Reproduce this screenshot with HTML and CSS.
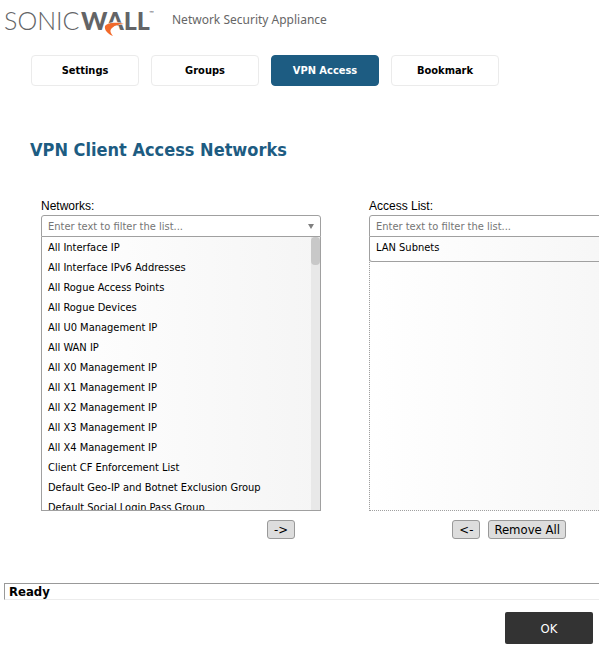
FILE: index.html
```html
<!DOCTYPE html>
<html lang="en">
<head>
  <meta charset="UTF-8" />
  <meta name="viewport" content="width=device-width, initial-scale=1.0"/>
  <title>VPN Client Access Networks</title>
  <link rel="stylesheet" href="styles.css">
</head>
<body>
  <header class="page-header">
    <svg class="logo" viewBox="0 0 154 30" width="154" height="30" role="img" aria-label="SonicWall">
      <text class="logo-light" x="0" y="22">SONIC</text>
      <text class="logo-bold" x="77" y="22">WALL</text>
      <text class="logo-tm" x="145" y="7">™</text>
      <path d="M120 16 C114 14 104 14 101 18 C100 22 104 26 109 28 C107 25 105 23 108 20 C111 17 116 16 120 16 Z" fill="#f26a2a" stroke="#fff" stroke-width="1" paint-order="stroke"/>
    </svg>
    <span class="product">Network Security Appliance</span>
  </header>

  <nav class="tabs">
    <button type="button" class="tab">Settings</button>
    <button type="button" class="tab">Groups</button>
    <button type="button" class="tab active">VPN Access</button>
    <button type="button" class="tab">Bookmark</button>
  </nav>

  <main>
    <h1>VPN Client Access Networks</h1>

    <div class="lists">
      <section class="list-column">
        <label for="networks">Networks:</label>
        <div class="filter">
          <input type="text" id="networks" placeholder="Enter text to filter the list..." />
          <svg class="arrow" viewBox="0 0 6 5" width="6" height="5"><path d="M0 0h6L3 5z" fill="#808080"/></svg>
        </div>
        <div class="list-box">
          <ul class="items">
            <li>All Interface IP</li>
            <li>All Interface IPv6 Addresses</li>
            <li>All Rogue Access Points</li>
            <li>All Rogue Devices</li>
            <li>All U0 Management IP</li>
            <li>All WAN IP</li>
            <li>All X0 Management IP</li>
            <li>All X1 Management IP</li>
            <li>All X2 Management IP</li>
            <li>All X3 Management IP</li>
            <li>All X4 Management IP</li>
            <li>Client CF Enforcement List</li>
            <li>Default Geo-IP and Botnet Exclusion Group</li>
            <li>Default Social Login Pass Group</li>
          </ul>
          <div class="scroll-track"><div class="scroll-thumb"></div></div>
        </div>
        <div class="list-actions">
          <button type="button" class="small-btn" aria-label="Add">-&gt;</button>
        </div>
      </section>

      <section class="list-column">
        <label for="access">Access List:</label>
        <div class="filter">
          <input type="text" id="access" placeholder="Enter text to filter the list..." />
        </div>
        <div class="drop-box">
          <ul class="items selected-items">
            <li>LAN Subnets</li>
          </ul>
        </div>
        <div class="list-actions access-actions">
          <button type="button" class="small-btn" aria-label="Remove">&lt;-</button>
          <button type="button" class="small-btn">Remove All</button>
        </div>
      </section>
    </div>
  </main>

  <footer>
    <div class="status">Ready</div>
    <div class="footer-actions">
      <button type="button" class="ok-btn">OK</button>
    </div>
  </footer>
</body>
</html>
```
FILE: styles.css
```css
:root {
  --blue: #1d5c82;
  --border: #a0a0a0;
  --fade: linear-gradient(to right, #ffffff, #f5f5f5);
  --font-family: Tahoma, "DejaVu Sans Condensed", "Noto Sans", sans-serif;
}

* {
  margin: 0;
  padding: 0;
  box-sizing: border-box;
}

body {
  font-family: var(--font-family);
  font-size: 11px;
  background: #fff;
  color: #000;
  overflow-x: hidden;
}

button,
input {
  font-family: inherit;
}

.page-header {
  display: flex;
  align-items: flex-start;
  gap: 14px;
  height: 55px;
  padding: 8px 4px;
}

.logo {
  flex-shrink: 0;
  overflow: visible;
}

.logo text {
  font-family: Lato, sans-serif;
  font-size: 25px;
  fill: #636466;
}

.logo .logo-light {
  font-weight: 300;
}

.logo .logo-bold {
  font-weight: 900;
}

.logo .logo-tm {
  font-size: 6px;
}

.product {
  font-family: "Noto Sans", sans-serif;
  font-size: 12px;
  line-height: 24px;
  color: #666;
}

.tabs {
  display: flex;
  gap: 12px;
  padding-left: 31px;
}

.tab {
  width: 108px;
  height: 31px;
  background: #fff;
  border: 1px solid #ebebeb;
  border-radius: 4px;
  font-size: 11px;
  font-weight: bold;
  cursor: pointer;
}

.tab.active {
  background: var(--blue);
  border-color: var(--blue);
  color: #fff;
}

h1 {
  margin: 52px 0 0 30px;
  font-size: 18px;
  line-height: 24px;
  color: var(--blue);
}

.lists {
  display: flex;
  gap: 48px;
  padding: 36px 0 0 41px;
}

.list-column {
  flex: 0 0 280px;
}

.list-column label {
  display: block;
  font-family: Arial, "Liberation Sans", sans-serif;
  font-size: 12px;
  line-height: 17px;
}

.filter {
  display: flex;
  align-items: center;
  height: 22px;
  padding: 1px 6px 0;
  border: 1px solid var(--border);
  border-radius: 3px 3px 0 0;
}

.filter input {
  flex: 1;
  min-width: 0;
  border: none;
  outline: none;
  background: transparent;
  font-size: 11px;
}

.filter input::placeholder {
  color: #757575;
}

.list-box {
  display: flex;
  height: 274px;
  border: 1px solid var(--border);
  border-top: none;
  background: var(--fade);
  overflow: hidden;
}

.items {
  flex: 1;
  padding-top: 1px;
  list-style: none;
}

.items li {
  padding-left: 6px;
  line-height: 20px;
  white-space: nowrap;
}

.scroll-track {
  width: 9px;
  background: #e8e8e8;
}

.scroll-thumb {
  height: 28px;
  border-radius: 4px;
  background: #c8c8c8;
}

.drop-box {
  height: 274px;
  border: 1px dotted var(--border);
  border-top: none;
  background: var(--fade);
}

.selected-items {
  margin: 0 -1px;
  padding-bottom: 3px;
  border: 1px solid var(--border);
  border-top: none;
  border-radius: 0 0 3px 3px;
}

.list-actions {
  display: flex;
  justify-content: flex-end;
  gap: 8px;
  padding: 9px 26px 0 0;
}

.access-actions {
  padding-right: 83px;
}

.small-btn {
  min-width: 28px;
  height: 19px;
  padding: 0 5px;
  background: #dddddd;
  border: 1px solid #999;
  border-radius: 3px;
  font-size: 13px;
  line-height: 17px;
  color: #000;
  cursor: pointer;
}

.status {
  margin: 44px 0 0 4px;
  padding-left: 4px;
  border: 1px solid #999;
  border-right: none;
  border-bottom-color: #ececec;
  font-size: 13px;
  font-weight: bold;
  line-height: 15px;
}

.footer-actions {
  display: flex;
  justify-content: flex-end;
  padding: 12px 6px 7px;
}

.ok-btn {
  width: 88px;
  height: 32px;
  background: #333;
  border: none;
  border-radius: 2px;
  font-size: 13px;
  color: #fff;
  cursor: pointer;
}
```
